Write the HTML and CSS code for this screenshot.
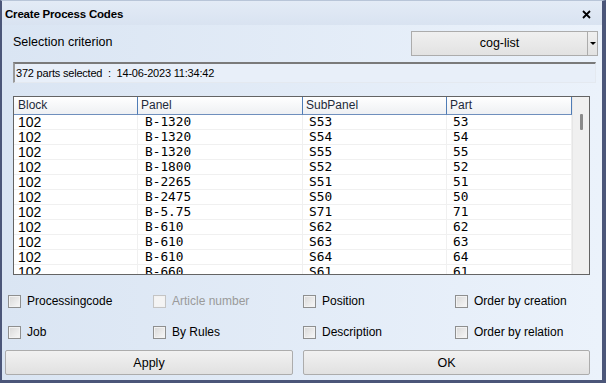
FILE: index.html
```html
<!DOCTYPE html>
<html lang="en">
<head>
    <meta charset="UTF-8">
    <title>Create Process Codes</title>
    <link rel="stylesheet" href="styles.css">
</head>
<body>
    <div class="window">
        <div class="titlebar">
            <span class="title">Create Process Codes</span>
            <svg class="close" width="9" height="9" viewBox="0 0 9 9">
                <path d="M1 1 L8 8 M8 1 L1 8" stroke="#000" stroke-width="1.8"/>
            </svg>
        </div>

        <div class="content">
            <div class="top-row">
                <span class="label">Selection criterion</span>
                <div class="combo">
                    <span class="combo-text">cog-list</span>
                    <span class="combo-arrow"></span>
                </div>
            </div>

            <div class="status">372 parts selected &nbsp;:&nbsp; 14-06-2023 11:34:42</div>

            <div class="grid">
                <div class="table">
                    <div class="row head">
                        <div class="cell">Block</div>
                        <div class="cell">Panel</div>
                        <div class="cell">SubPanel</div>
                        <div class="cell">Part</div>
                    </div>
                    <div id="rows"></div>
                </div>
                <div class="scrollbar"><div class="thumb"></div></div>
            </div>

            <div class="options">
                <label class="opt"><span class="box"></span>Processingcode</label>
                <label class="opt disabled"><span class="box"></span>Article number</label>
                <label class="opt"><span class="box"></span>Position</label>
                <label class="opt"><span class="box"></span>Order by creation</label>
                <label class="opt"><span class="box"></span>Job</label>
                <label class="opt"><span class="box"></span>By Rules</label>
                <label class="opt"><span class="box"></span>Description</label>
                <label class="opt"><span class="box"></span>Order by relation</label>
            </div>

            <div class="buttons">
                <button class="btn apply">Apply</button>
                <button class="btn ok">OK</button>
            </div>
        </div>
    </div>

    <script>
        let parts = [
            ['102', 'B-1320', 'S53', '53'],
            ['102', 'B-1320', 'S54', '54'],
            ['102', 'B-1320', 'S55', '55'],
            ['102', 'B-1800', 'S52', '52'],
            ['102', 'B-2265', 'S51', '51'],
            ['102', 'B-2475', 'S50', '50'],
            ['102', 'B-5.75', 'S71', '71'],
            ['102', 'B-610', 'S62', '62'],
            ['102', 'B-610', 'S63', '63'],
            ['102', 'B-610', 'S64', '64'],
            ['102', 'B-660', 'S61', '61']
        ];

        let html = '';
        parts.forEach(p => {
            html += `<div class="row">
                <div class="cell block">${p[0]}</div>
                <div class="cell mono panel">${p[1]}</div>
                <div class="cell mono">${p[2]}</div>
                <div class="cell mono">${p[3]}</div>
            </div>`;
        });
        document.getElementById('rows').innerHTML = html;
    </script>
</body>
</html>
```

FILE: styles.css
```css
html, body {
    margin: 0;
    padding: 0;
}
body {
    font-family: "Liberation Sans", Arial, sans-serif;
    font-size: 12px;
    color: #000;
}
.window {
    width: 606px;
    height: 383px;
    box-sizing: border-box;
    border-style: solid;
    border-color: #4b5679;
    border-width: 1px 4px 3px 2px;
    border-top-color: #b8c5d8;
    background: linear-gradient(to right, #dae5f3, #ebf2fb);
    display: flex;
    flex-direction: column;
    overflow: hidden;
}
.titlebar {
    height: 24px;
    display: flex;
    align-items: center;
    justify-content: space-between;
    padding: 0 11px 0 3px;
    background: linear-gradient(#e3ebf6, #d9e3f1);
}
.title {
    font-weight: bold;
    font-size: 11.5px;
    letter-spacing: -0.2px;
    padding-top: 2px;
}
.close {
    margin-top: 3px;
}
.content {
    flex: 1;
    display: flex;
    flex-direction: column;
}
.top-row {
    margin-top: 6px;
    height: 25px;
    display: flex;
    justify-content: space-between;
    align-items: flex-start;
    padding-left: 11px;
}
.label {
    font-size: 12.5px;
    margin-top: 4px;
}
.combo {
    width: 187px;
    height: 25px;
    box-sizing: border-box;
    margin-right: 4px;
    display: flex;
    border: 1px solid #acacac;
    background: linear-gradient(#f0f0f0, #e2e2e2);
}
.combo-text {
    flex: 1;
    text-align: center;
    line-height: 23px;
    font-size: 12.5px;
    border-right: 1px solid #acacac;
}
.combo-arrow {
    width: 9px;
    position: relative;
}
.combo-arrow::after {
    content: "";
    position: absolute;
    left: 2px;
    top: 10px;
    border-left: 3px solid transparent;
    border-right: 3px solid transparent;
    border-top: 3px solid #000;
}
.status {
    margin: 6px 6px 0 11px;
    height: 21px;
    box-sizing: border-box;
    border-style: solid;
    border-width: 2px 1px 1px 2px;
    border-color: #7a7a7a #e4e9f0 #e4e9f0 #9a9a9a;
    background: #e8eff9;
    font-size: 11px;
    letter-spacing: -0.2px;
    line-height: 18px;
    padding-left: 1px;
    white-space: nowrap;
}
.grid {
    margin: 13px 0 0 11px;
    width: 577px;
    height: 179px;
    box-sizing: border-box;
    border: 1px solid #646464;
    background: #fff;
    display: flex;
    overflow: hidden;
}
.table {
    width: 558px;
}
.row {
    display: grid;
    grid-template-columns: 124px 165px 144px 125px;
    height: 15px;
}
.cell {
    border-right: 1px solid #f0f0f0;
    border-bottom: 1px solid #f0f0f0;
    padding-left: 6px;
    line-height: 14px;
    white-space: nowrap;
    overflow: hidden;
}
.row.head {
    height: 18px;
}
.head .cell {
    background: linear-gradient(#ffffff, #eef0f3);
    border-right: 1px solid #4f7cb6;
    border-bottom: 1px solid #6f8fbd;
    line-height: 17px;
    padding-left: 3px;
    font-size: 12px;
    color: #1e2a3a;
}
.head .cell:first-child {
    padding-left: 4px;
}
.cell.block {
    padding-left: 4px;
    font-size: 14px;
}
.cell.mono {
    font-family: "DejaVu Sans Mono", "Liberation Mono", monospace;
    font-size: 12.8px;
}
.cell.panel {
    padding-left: 7px;
}
.scrollbar {
    width: 17px;
    background: #f0f0f0;
    border-left: 1px solid #e6e6e6;
    box-sizing: border-box;
}
.thumb {
    width: 3px;
    height: 16px;
    margin: 17px 0 0 7px;
    background: #8a8a8a;
    border-radius: 1px;
}
.options {
    margin-top: 17px;
    padding-left: 6px;
    display: grid;
    grid-template-columns: 145px 150px 152px 1fr;
    grid-auto-rows: 18px;
    row-gap: 13px;
}
.opt {
    display: flex;
    align-items: center;
    gap: 6px;
    font-size: 12px;
}
.box {
    width: 13px;
    height: 13px;
    box-sizing: border-box;
    border: 1px solid #8e8f8f;
    background: linear-gradient(135deg, #d8d8d8, #f8f8f8);
    box-shadow: inset 0 0 0 1px #f2f2f2;
}
.opt.disabled {
    color: #9a9a9a;
}
.opt.disabled .box {
    border-color: #c4c4c4;
    background: #f4f4f4;
}
.buttons {
    margin-top: 9px;
    padding-left: 3px;
    display: flex;
    gap: 10px;
}
.btn {
    height: 25px;
    border: 1px solid #acacac;
    border-radius: 2px;
    background: linear-gradient(#f1f1f1, #e1e1e1);
    font-family: "Liberation Sans", Arial, sans-serif;
    font-size: 12.5px;
    color: #000;
    padding: 0;
}
.apply {
    width: 288px;
}
.ok {
    width: 287px;
}
```
